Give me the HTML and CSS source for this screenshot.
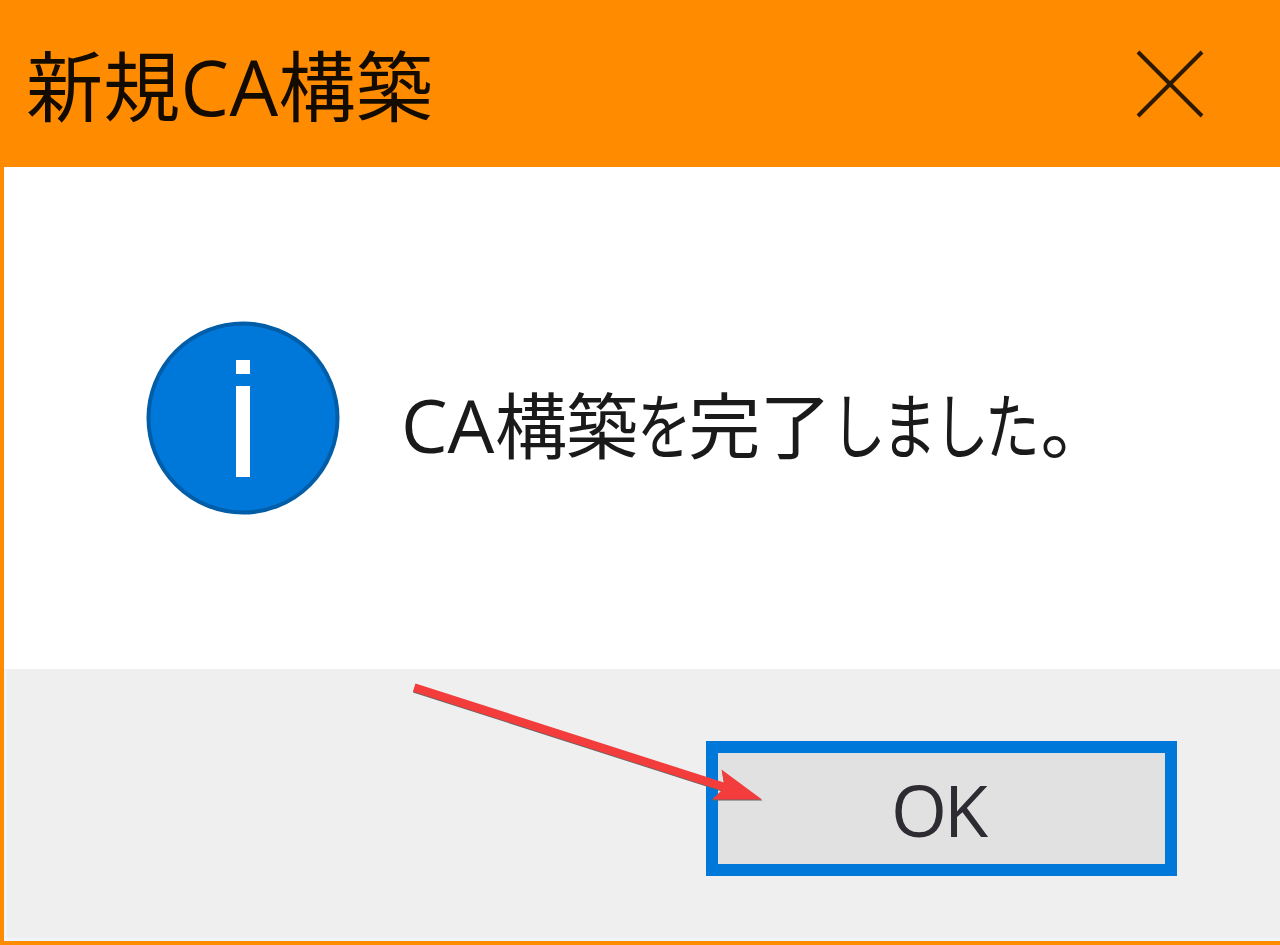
FILE: index.html
```html
<!DOCTYPE html>
<html lang="ja">
<head>
<meta charset="utf-8">
<title>新規CA構築</title>
<link rel="stylesheet" href="styles.css">
</head>
<body>
<div class="dialog">
  <header class="titlebar">
    <h1 class="title">新規<span class="title-latin">CA</span>構築</h1>
    <svg class="close" viewBox="0 0 68 68" aria-label="閉じる"><path d="M2 2L66 66M66 2L2 66"/></svg>
  </header>
  <main class="content">
    <svg class="info" viewBox="0 0 194 194">
      <circle cx="97" cy="97" r="94.5"/>
      <rect x="90" y="39" width="14" height="14"/>
      <rect x="90" y="65" width="14" height="91"/>
    </svg>
    <p class="message"><span class="latin">CA</span><span class="kanji">構</span><span class="kanji">築</span><span class="kana">を</span><span class="kanji">完</span><span class="kanji">了</span><span class="kana">し</span><span class="kana">ま</span><span class="kana">し</span><span class="kana">た</span><span class="stop">。</span></p>
  </main>
  <footer class="footer">
    <button class="ok">OK</button>
    <svg class="arrow" viewBox="0 0 352 122">
      <path class="arrow-shadow" d="M2.500 .5L311 100L309 87L349.500 116.500H299L309 107.500L0 8.500Z"/>
      <path d="M2.500 -.5L311 98.500L308.500 85.500L349 115.500H299L308.500 106.500L0 7.500Z"/>
    </svg>
  </footer>
</div>
</body>
</html>
```
FILE: styles.css
```css
* { box-sizing: border-box; }

body { margin: 0; }

.dialog {
  display: flex;
  flex-direction: column;
  width: 1280px;
  height: 945px;
  overflow: hidden;
  border-left: 4px solid #ff8c00;
  border-bottom: 4px solid #ff8c00;
  background: #fff;
  color: #1a1a1a;
  font-family: "Open Sans", "Noto Sans CJK JP", sans-serif;
}

.titlebar {
  display: flex;
  flex: 0 0 167px;
  align-items: center;
  justify-content: space-between;
  padding: 0 76px 0 22px;
  background: #ff8c00;
}

.title {
  margin: 6px 0 0;
  color: #140b00;
  font-size: 77px;
  font-weight: 400;
  line-height: 100px;
  letter-spacing: .3px;
  white-space: nowrap;
}

.title-latin { font-weight: 400; }

.close {
  width: 68px;
  height: 68px;
  fill: none;
  stroke: #2b1900;
  stroke-width: 4;
}

.content {
  display: flex;
  flex: 0 0 502px;
  align-items: center;
  padding-left: 142px;
}

.info {
  flex: none;
  width: 194px;
  height: 194px;
  fill: #fff;
}

.info circle {
  fill: #0078d9;
  stroke: #005da8;
  stroke-width: 4;
}

.message {
  display: flex;
  margin: 13px 0 0 61px;
  font-size: 72px;
  line-height: 100px;
}

.latin { width: 94px; font-size: 74px; }

.kanji { width: 71px; }

.kana {
  width: 51.500px;
  transform: scaleX(.76);
  transform-origin: left;
}

.stop {
  width: 51px;
  margin-left: 4px;
}

.footer {
  position: relative;
  flex: 1;
  padding: 72px 0 0 702px;
  background: #efefef;
  border-left: 3px solid #f0f5fb;
  border-bottom: 3px solid #f0f5fb;
}

.ok {
  display: block;
  width: 471px;
  height: 135px;
  margin-left: -3px;
  padding: 0 7px 0 0;
  border: 12px solid #0078d9;
  background: #e1e1e1;
  color: #2e2c32;
  font: 72px/100px "Open Sans", sans-serif;
  letter-spacing: -3px;
}

.arrow {
  position: absolute;
  left: 406px;
  top: 15px;
  width: 352px;
  height: 122px;
  overflow: visible;
  fill: #f33c3c;
}

.arrow-shadow { fill: #666; }
```
